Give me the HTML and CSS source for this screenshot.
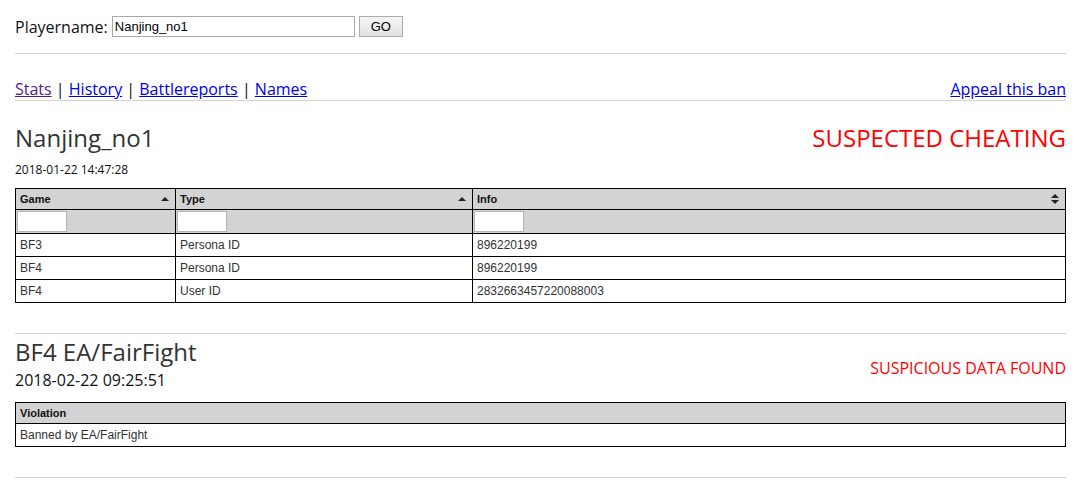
FILE: index.html
```html
<!DOCTYPE html>
<html>
<head>
<meta charset="utf-8">
<link rel="stylesheet" href="styles.css">
</head>
<body>
<div class="page">
  <form class="search">
    <label class="search-label">Playername:</label>
    <input class="search-input" type="text" value="Nanjing_no1">
    <button class="search-btn" type="button">GO</button>
  </form>
  <hr class="rule rule-top">
  <nav class="nav">
    <div class="nav-left">
      <a class="visited" href="#">Stats</a> | <a href="#">History</a> | <a href="#">Battlereports</a> | <a href="#">Names</a>
    </div>
    <a href="#">Appeal this ban</a>
  </nav>

  <section class="player">
    <div class="title-row">
      <h1 class="title">Nanjing_no1</h1>
      <div class="status-big">SUSPECTED CHEATING</div>
    </div>
    <div class="date-small">2018-01-22 14:47:28</div>
    <table class="grid">
      <colgroup><col class="c1"><col class="c2"><col class="c3"></colgroup>
      <thead>
        <tr class="head">
          <th><span>Game</span><svg class="sort" viewBox="0 0 8 8" width="8" height="8"><path d="M0 6 L4 2 L8 6 Z" fill="#222"/></svg></th>
          <th><span>Type</span><svg class="sort" viewBox="0 0 8 8" width="8" height="8"><path d="M0 6 L4 2 L8 6 Z" fill="#222"/></svg></th>
          <th><span>Info</span><svg class="sort" viewBox="0 0 8 10" width="8" height="10"><path d="M0 4 L4 0 L8 4 Z M0 6 L8 6 L4 10 Z" fill="#222"/></svg></th>
        </tr>
        <tr class="filter">
          <td><input class="filter-input" type="text"></td>
          <td><input class="filter-input" type="text"></td>
          <td><input class="filter-input" type="text"></td>
        </tr>
      </thead>
      <tbody>
        <tr><td>BF3</td><td>Persona ID</td><td>896220199</td></tr>
        <tr><td>BF4</td><td>Persona ID</td><td>896220199</td></tr>
        <tr><td>BF4</td><td>User ID</td><td>2832663457220088003</td></tr>
      </tbody>
    </table>
  </section>

  <hr class="rule rule-mid">

  <section class="report">
    <div class="report-row">
      <div class="report-left">
        <h2 class="title">BF4 EA/FairFight</h2>
        <div class="date-big">2018-02-22 09:25:51</div>
      </div>
      <div class="status-small">SUSPICIOUS DATA FOUND</div>
    </div>
    <table class="grid">
      <thead><tr class="head"><th><span>Violation</span></th></tr></thead>
      <tbody><tr><td>Banned by EA/FairFight</td></tr></tbody>
    </table>
  </section>

  <hr class="rule rule-bottom">
</div>
</body>
</html>
```

FILE: styles.css
```css
html, body {
  margin: 0;
  padding: 0;
  background: #fff;
}
.page {
  width: 1051px;
  margin-left: 15px;
  font-family: "Open Sans", "DejaVu Sans", sans-serif;
  color: #333;
}
.search {
  display: flex;
  align-items: center;
  margin: 0;
  padding-top: 15px;
  height: 23px;
  font-size: 16px;
  color: #111;
}
.search-label {
  margin-right: 4px;
}
.search-input {
  box-sizing: border-box;
  width: 243px;
  height: 21px;
  margin: 0;
  padding: 1px 2px;
  border: 1px solid #a9a9a9;
  font-family: "Liberation Sans", Arial, sans-serif;
  font-size: 13px;
  color: #000;
}
.search-btn {
  box-sizing: border-box;
  width: 44px;
  height: 21px;
  margin: 0 0 0 4px;
  padding: 0;
  border: 1px solid #adadad;
  border-radius: 0;
  background: linear-gradient(#f6f6f6, #e1e1e1);
  font-family: "Liberation Sans", Arial, sans-serif;
  font-size: 13px;
  color: #000;
}
.rule {
  border: 0;
  height: 1px;
  background: #d3d3d3;
  margin: 0;
}
.rule-top {
  margin-top: 15px;
}
.nav {
  display: flex;
  justify-content: space-between;
  align-items: flex-end;
  margin-top: 24px;
  height: 22px;
  line-height: 22px;
  font-size: 16px;
  color: #111;
  border-bottom: 1px solid #d3d3d3;
}
.nav a {
  color: #0000ee;
}
.nav a.visited {
  color: #551a8b;
}
.player {
  padding-top: 20px;
}
.title-row {
  display: flex;
  justify-content: space-between;
  align-items: center;
  height: 34px;
}
.title {
  margin: 0;
  font-size: 24px;
  font-weight: normal;
  line-height: 34px;
  color: #333;
}
.status-big {
  font-size: 24px;
  color: #ff0000;
  line-height: 34px;
}
.date-small {
  margin-top: 6px;
  font-size: 12px;
  line-height: 18px;
  color: #111;
}
.grid {
  width: 100%;
  table-layout: fixed;
  border-collapse: collapse;
  margin-top: 9px;
  font-family: "Liberation Sans", Arial, sans-serif;
  font-size: 12px;
}
.c1 { width: 160px; }
.c2 { width: 297px; }
.grid th, .grid td {
  border: 1px solid #000;
  padding: 0 4px;
  text-align: left;
}
.head th {
  background: #d3d3d3;
  height: 20px;
  font-size: 11px;
  font-weight: bold;
  color: #111;
  position: relative;
}
.sort {
  position: absolute;
  right: 6px;
  top: 6px;
}
.head th:last-child .sort {
  top: 5px;
}
.filter td {
  background: #d3d3d3;
  height: 23px;
  padding: 0 1px;
}
.filter-input {
  box-sizing: border-box;
  display: block;
  width: 50px;
  height: 21px;
  margin: 0;
  border: 1px solid #b5b5b5;
  background: #fff;
}
.grid tbody td {
  height: 22px;
  color: #333;
}
.rule-mid {
  margin-top: 30px;
}
.report-row {
  display: flex;
  justify-content: space-between;
  align-items: center;
  padding-top: 1px;
}
.date-big {
  font-size: 16px;
  line-height: 22px;
  color: #111;
}
.status-small {
  font-size: 16px;
  color: #ff0000;
  margin-top: 10px;
}
.report .grid {
  margin-top: 11px;
}
.rule-bottom {
  margin-top: 30px;
}
```
